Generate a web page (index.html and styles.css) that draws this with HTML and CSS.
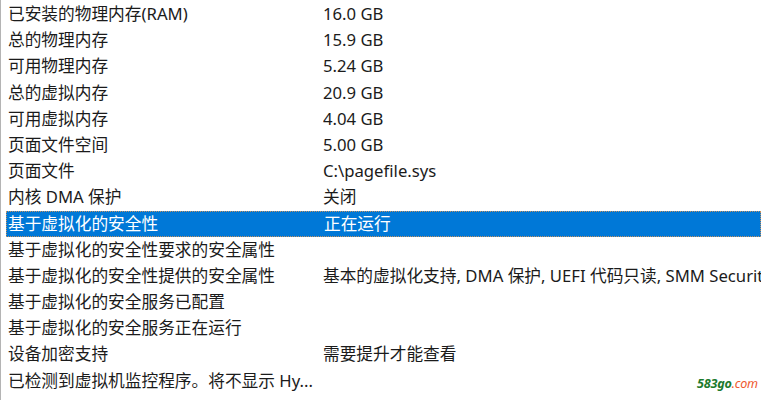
FILE: index.html
```html
<!DOCTYPE html>
<html lang="zh-CN">
<head>
<meta charset="utf-8">
<title>系统摘要</title>
<link rel="stylesheet" href="styles.css">
</head>
<body>
<div class="list">
  <div class="row"><span class="k">已安装的物理内存(RAM)</span><span class="v">16.0 GB</span></div>
  <div class="row"><span class="k">总的物理内存</span><span class="v">15.9 GB</span></div>
  <div class="row"><span class="k">可用物理内存</span><span class="v">5.24 GB</span></div>
  <div class="row"><span class="k">总的虚拟内存</span><span class="v">20.9 GB</span></div>
  <div class="row"><span class="k">可用虚拟内存</span><span class="v">4.04 GB</span></div>
  <div class="row"><span class="k">页面文件空间</span><span class="v">5.00 GB</span></div>
  <div class="row"><span class="k">页面文件</span><span class="v">C:\pagefile.sys</span></div>
  <div class="row"><span class="k">内核 DMA 保护</span><span class="v">关闭</span></div>
  <div class="row selected"><span class="k">基于虚拟化的安全性</span><span class="v">正在运行</span></div>
  <div class="row"><span class="k">基于虚拟化的安全性要求的安全属性</span><span class="v"></span></div>
  <div class="row"><span class="k">基于虚拟化的安全性提供的安全属性</span><span class="v">基本的虚拟化支持, DMA 保护, UEFI 代码只读, SMM Security Mitigations 1.0</span></div>
  <div class="row"><span class="k">基于虚拟化的安全服务已配置</span><span class="v"></span></div>
  <div class="row"><span class="k">基于虚拟化的安全服务正在运行</span><span class="v"></span></div>
  <div class="row"><span class="k">设备加密支持</span><span class="v">需要提升才能查看</span></div>
  <div class="row"><span class="k">已检测到虚拟机监控程序。将不显示 Hy...</span><span class="v"></span></div>
</div>
<div class="watermark"><span class="wm-a">583go</span><span class="wm-b">.com</span></div>
</body>
</html>
```

FILE: styles.css
```css
html, body {
  margin: 0;
  padding: 0;
  background: #ffffff;
  overflow: hidden;
}
body {
  width: 761px;
  height: 400px;
  position: relative;
  font-family: "Noto Sans", "Noto Sans CJK SC", sans-serif;
  font-size: 16.7px;
  color: #1b1b1b;
}
.list {
  border-left: 1px solid #b4b4b4;
  height: 400px;
  padding-top: 1px;
  box-sizing: border-box;
}
.row {
  display: flex;
  height: 26.2px;
  line-height: 26.2px;
  margin-left: 5px;
  white-space: nowrap;
  overflow: hidden;
  box-sizing: border-box;
}
.k {
  width: 317px;
  flex: none;
  padding-left: 2px;
  box-sizing: border-box;
  overflow: hidden;
}
.v {
  flex: 1;
  overflow: hidden;
}
.selected {
  background: #0078d7;
  color: #ffffff;
  border: 1px dotted #c49262;
  line-height: 24.2px;
}
.selected .k {
  padding-left: 1px;
}
.watermark {
  position: absolute;
  left: 697px;
  top: 375px;
  white-space: nowrap;
  font-family: "Noto Sans", sans-serif;
  font-style: italic;
  font-size: 12.6px;
  letter-spacing: -0.2px;
}
.wm-a {
  color: #1c7a2c;
  font-weight: bold;
}
.wm-b {
  color: #ee5a2f;
}
```
